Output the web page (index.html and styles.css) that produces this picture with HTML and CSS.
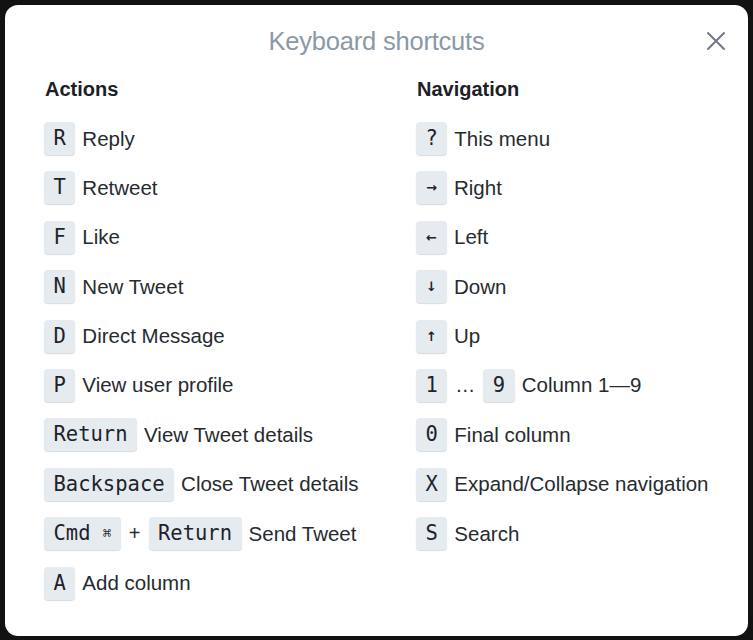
FILE: index.html
```html
<!DOCTYPE html>
<html>
<head>
<meta charset="utf-8">
<link rel="stylesheet" href="styles.css">
</head>
<body>
<div class="modal">
  <div class="header">
    <h1 class="title">Keyboard shortcuts</h1>
    <button class="close" aria-label="Close">
      <svg width="20" height="20" viewBox="0 0 20 20"><path d="M2 2 L18 18 M18 2 L2 18" stroke="#6f7a84" stroke-width="2" fill="none" stroke-linecap="round"/></svg>
    </button>
  </div>
  <div class="columns">
    <div class="col">
      <h2 class="heading">Actions</h2>
      <ul class="list">
        <li class="row"><kbd class="key">R</kbd><span class="label">Reply</span></li>
        <li class="row"><kbd class="key">T</kbd><span class="label">Retweet</span></li>
        <li class="row"><kbd class="key">F</kbd><span class="label">Like</span></li>
        <li class="row"><kbd class="key">N</kbd><span class="label">New Tweet</span></li>
        <li class="row"><kbd class="key">D</kbd><span class="label">Direct Message</span></li>
        <li class="row"><kbd class="key">P</kbd><span class="label">View user profile</span></li>
        <li class="row"><kbd class="key">Return</kbd><span class="label">View Tweet details</span></li>
        <li class="row"><kbd class="key">Backspace</kbd><span class="label">Close Tweet details</span></li>
        <li class="row"><kbd class="key">Cmd <span class="cmd">⌘</span></kbd><span class="sep">+</span><kbd class="key">Return</kbd><span class="label">Send Tweet</span></li>
        <li class="row"><kbd class="key">A</kbd><span class="label">Add column</span></li>
      </ul>
    </div>
    <div class="col">
      <h2 class="heading">Navigation</h2>
      <ul class="list">
        <li class="row"><kbd class="key">?</kbd><span class="label">This menu</span></li>
        <li class="row"><kbd class="key arrow">→</kbd><span class="label">Right</span></li>
        <li class="row"><kbd class="key arrow">←</kbd><span class="label">Left</span></li>
        <li class="row"><kbd class="key arrow">↓</kbd><span class="label">Down</span></li>
        <li class="row"><kbd class="key arrow">↑</kbd><span class="label">Up</span></li>
        <li class="row"><kbd class="key">1</kbd><span class="sep">…</span><kbd class="key">9</kbd><span class="label">Column 1—9</span></li>
        <li class="row"><kbd class="key">0</kbd><span class="label">Final column</span></li>
        <li class="row"><kbd class="key">X</kbd><span class="label">Expand/Collapse navigation</span></li>
        <li class="row"><kbd class="key">S</kbd><span class="label">Search</span></li>
      </ul>
    </div>
  </div>
</div>
</body>
</html>
```
FILE: styles.css
```css
html, body {
  margin: 0;
  padding: 0;
}
body {
  background: #121212;
  width: 753px;
  height: 640px;
  overflow: hidden;
  font-family: "Liberation Sans", Arial, sans-serif;
}
.modal {
  margin: 5px 5px 0 5px;
  height: 631px;
  background: #ffffff;
  border-radius: 13px;
  box-sizing: border-box;
  padding: 21px 39px 0 39px;
  position: relative;
}
.header {
  display: flex;
  justify-content: center;
  align-items: center;
  height: 30px;
}
.title {
  margin: 0;
  font-size: 25.5px;
  line-height: 30px;
  font-weight: 400;
  color: #8a99a6;
  letter-spacing: -0.2px;
}
.close {
  position: absolute;
  right: 22px;
  top: 26px;
  width: 20px;
  height: 20px;
  padding: 0;
  border: 0;
  background: none;
  display: flex;
}
.columns {
  display: grid;
  grid-template-columns: 372px 1fr;
  margin-top: 21px;
}
.heading {
  margin: 0 0 0 1px;
  font-size: 20px;
  line-height: 24px;
  font-weight: 700;
  color: #1c2126;
}
.list {
  list-style: none;
  margin: 21px 0 0 0;
  padding: 0;
  display: flex;
  flex-direction: column;
  gap: 16.4px;
}
.row {
  display: flex;
  align-items: center;
  gap: 7px;
  height: 33px;
}
.key {
  font-family: "DejaVu Sans Mono", "Liberation Mono", monospace;
  font-size: 20.5px;
  line-height: 33px;
  height: 33px;
  padding: 0 9.5px;
  background: #e6ebf0;
  border-radius: 4px;
  color: #1d2329;
  box-shadow: 0 1px 1px rgba(140, 155, 170, 0.35);
  box-sizing: border-box;
  min-width: 31px;
  text-align: center;
}
.key.arrow {
  font-family: "DejaVu Sans", sans-serif;
  font-size: 13px;
  font-weight: 700;
  padding: 0;
  width: 31px;
}
.cmd {
  font-size: 14px;
  vertical-align: 2px;
}
.label {
  font-size: 20.5px;
  color: #262b30;
}
.sep {
  font-size: 20px;
  color: #262b30;
  padding: 0 1px;
}
```
